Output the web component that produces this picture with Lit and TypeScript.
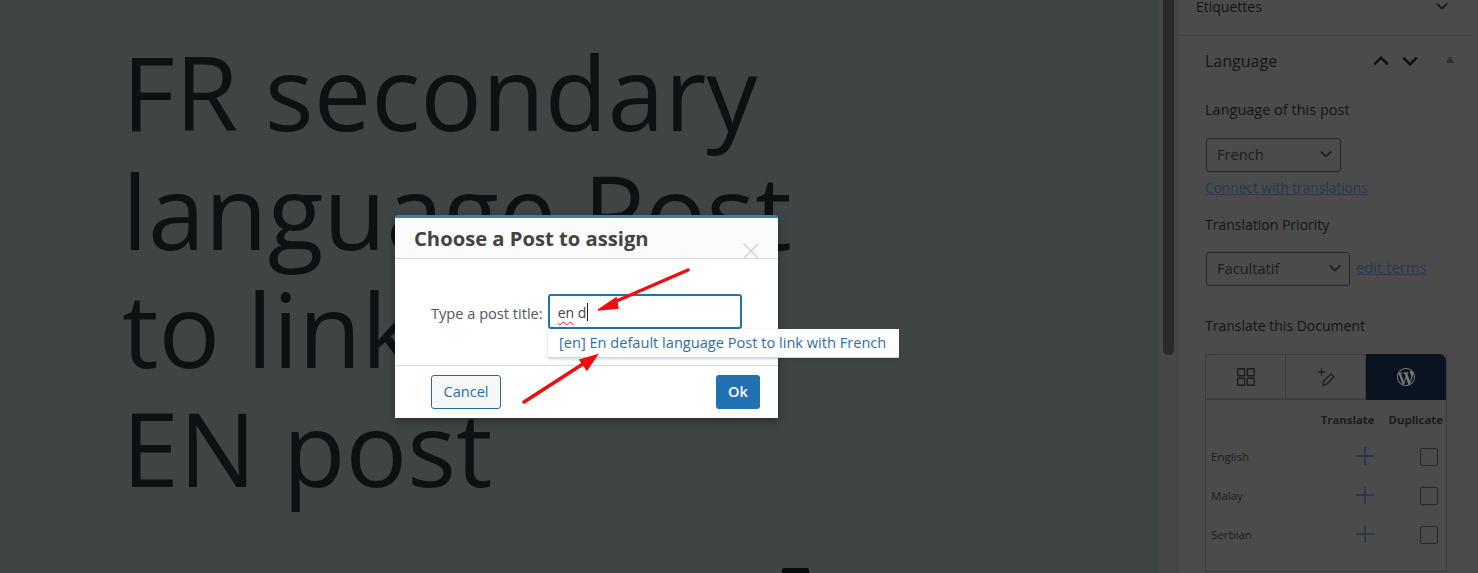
import { LitElement, html, css, svg } from "lit";
import { customElement } from "lit/decorators.js";

const chev = (w = 16, sw = 1.7, cls = "") => html`<svg class="chev ${cls}" width=${w} height=${w} viewBox="0 0 16 16"><path d="M2 5 L8 11 L14 5" fill="none" stroke="currentColor" stroke-width=${sw}/></svg>`;
const row = (name: string) => html`
  <div class="lrow"><span class="lname">${name}</span>
    <svg class="plus" width="20" height="20" viewBox="0 0 20 20"><path d="M10 1v18M1 10h18" stroke="#22344e" stroke-width="1.500" fill="none"/></svg>
    <span class="cb"></span></div>`;

@customElement("app-root")
export class AppRoot extends LitElement {
  static styles = css`
    :host { display: block; position: relative; width: 1478px; height: 573px; overflow: hidden; background: #3f4544; font-family: "Open Sans", "Noto Sans", sans-serif; }
    .page { display: grid; grid-template-columns: 1159px 19px 300px; height: 573px; }
    .main { background: #3f4544; padding: 32px 0 0 122px; position: relative; }
    h1 { margin: 0; white-space: nowrap; font-weight: 400; font-size: 102.5px; line-height: 118.7px; color: #0e1114; }
    .tip { position: absolute; left: 782px; top: 568px; width: 27px; height: 5px; background: #0a0a0a; border-radius: 2px 2px 0 0; }
    .track { background: #454746; border-right: 1px solid #424242; padding: 0 3px 0 4px; }
    .thumb { height: 355px; background: #2a2a2a; border-radius: 0 0 5px 5px; }
    .side { background: #4b4b4b; color: #1d1d1d; font-size: 14px; }
    .tags { height: 35px; border-bottom: 1px solid #414141; display: flex; justify-content: space-between; padding: 0 25px 0 18px; margin-right: 4px; color: #141414; }
    .tags span { margin-top: -3px; line-height: 20px; font-weight: 500; }
    .tags .chev { margin-top: -1px; color: #141414; }
    .body { padding: 0 28px 0 27px; }
    .head { display: flex; align-items: center; height: 50px; }
    .head .t { flex: 1; font-size: 16px; color: #161616; }
    .head .chev { color: #0e0e0e; margin-right: 11px; }
    .head .chev.up { transform: scaleY(-1); }
    .head .chev.b2 { margin-right: 27px; }
    .tri { width: 0; height: 0; border-left: 4.5px solid transparent; border-right: 4.5px solid transparent; border-bottom: 7px solid #2e2e2e; margin-right: -4px; margin-top: -4px; }
    .lab { color: #141414; line-height: 20px; }
    .l1 { margin-top: 14px; font-size: 14.5px; }
    .sel { box-sizing: border-box; height: 34px; border: 1px solid #262626; border-radius: 3px; display: flex; align-items: center; justify-content: space-between; padding: 0 7px 2px 10px; color: #1c1c1c; font-size: 14.6px; flex: none; }
    .sel .chev { color: #1c1c1c; }
    .s1 { width: 135px; margin: 18px 0 0 1px; }
    .s2 { width: 144px; margin-left: 1px; }
    .link { color: #263850; text-decoration: underline; line-height: 20px; display: block; }
    .c1 { margin-top: 6px; font-size: 13.7px; }
    .c2 { font-size: 14.8px; margin-top: -4px; }
    .l2 { margin-top: 17px; }
    .line { display: flex; align-items: center; gap: 6px; margin-top: 17px; }
    .l3 { margin-top: 30px; }
    .box { margin-top: 18px; width: 242px; box-sizing: border-box; height: 218px; border: 1px solid #3c3c3c; border-top: 0; }
    .tabs { display: grid; grid-template-columns: 80px 80px 80px; height: 46px; border-top: 1px solid #3c3c3c; margin-left: -1px; border-left: 1px solid #3c3c3c; border-radius: 4px 4px 0 0; border-bottom: 2px solid #3c3c3c; box-sizing: border-box; width: 242px; }
    .tab { display: flex; align-items: center; justify-content: center; border-right: 1px solid #3c3c3c; color: #1d1d1d; }
    .tab.on { background: #0a1320; border: 0; margin-top: -1px; margin-bottom: -2px; border-radius: 0 7px 0 0; color: #74777c; }
    .thd { display: flex; justify-content: flex-end; gap: 14px; font-size: 11.4px; font-weight: 700; color: #1b1b1b; padding: 12px 3px 9px 0; line-height: 16px; }
    .lrow { display: flex; align-items: center; height: 39px; padding: 0 8px 0 5px; font-size: 11.5px; color: #1c1c1c; }
    .lname { flex: 1; }
    .plus { margin-right: 45px; margin-top: -2px; }
    .cb { width: 18px; height: 18px; box-sizing: border-box; border: 1px solid #262626; border-radius: 2px; }

    .modal { position: absolute; left: 395px; top: 215px; width: 383px; height: 203px; background: #fff; box-sizing: border-box; border-top: 3px solid #3f7f98; border-radius: 3px 3px 0 0; box-shadow: 0 3px 8px rgba(0,0,0,.35); display: flex; flex-direction: column; }
    .mh { height: 41px; box-sizing: border-box; border-bottom: 1px solid #d5d9dd; background: #fbfbfb; padding: 0 0 0 19px; position: relative; font-size: 20.2px; font-weight: 700; color: #434343; line-height: 41px; white-space: nowrap; }
    .x { position: absolute; right: 19px; top: 25px; }
    .mb { height: 107px; box-sizing: border-box; border-bottom: 1px solid #d5d9dd; display: flex; padding: 35px 0 0 36px; gap: 5px; align-items: flex-start; font-size: 14.6px; color: #50575e; white-space: nowrap; }
    .mb label { line-height: 38px; }
    .inp { width: 194px; height: 35px; box-sizing: border-box; border: 2px solid #2271b1; border-radius: 3px; padding-left: 8px; line-height: 33px; color: #3c434a; display: flex; font-size: 14px; }
    .sq { text-decoration: underline wavy #d92020; text-decoration-thickness: 1px; text-underline-offset: 3px; }
    .caret { width: 1px; height: 18px; background: #222; margin: 7px 0 0 1px; }
    .mf { flex: 1; display: flex; align-items: center; justify-content: space-between; padding: 0 18px 0 36px; }
    .btn { box-sizing: border-box; height: 34px; border-radius: 3px; font-size: 14.6px; display: flex; align-items: center; justify-content: center; padding-bottom: 2px; }
    .cancel { width: 70px; border: 1px solid #2a6a96; color: #2a6fa6; background: #f6f7f7; }
    .ok { width: 44px; background: #2271b1; color: #fff; font-weight: 600; }
    .menu { position: absolute; left: 548px; top: 329px; width: 351px; height: 29px; box-sizing: border-box; background: #fff; border-bottom: 1px solid #c3d6e4; box-shadow: 0 1px 3px rgba(0,0,0,.18); padding-left: 11px; line-height: 27px; font-size: 14.6px; color: #2c6fa5; white-space: nowrap; }
    .arrows { position: absolute; left: 0; top: 0; pointer-events: none; }
  `;
  render() {
    return html`
      <div class="page">
        <div class="main">
          <h1>FR secondary<br />language Post<br />to link with<br />EN post</h1>
          <div class="tip"></div>
        </div>
        <div class="track"><div class="thumb"></div></div>
        <div class="side">
          <div class="tags"><span>Etiquettes</span>${chev(14, 1.8)}</div>
          <div class="body">
            <div class="head"><span class="t">Language</span>
              ${chev(18, 2, "up")}
              ${chev(18, 2, "b2")}
              <span class="tri"></span></div>
            <div class="lab l1">Language of this post</div>
            <div class="sel s1">French ${chev(14)}</div>
            <a class="link c1">Connect with translations</a>
            <div class="lab l2">Translation Priority</div>
            <div class="line"><div class="sel s2">Facultatif ${chev(14)}</div><a class="link c2">edit terms</a></div>
            <div class="lab l3">Translate this Document</div>
            <div class="box">
              <div class="tabs">
                <div class="tab"><svg width="20" height="20" viewBox="0 0 20 20" fill="none" stroke="currentColor" stroke-width="1.4"><rect x="1.7" y="1.7" width="7" height="7" rx=".5"/><rect x="11.3" y="1.7" width="7" height="7" rx=".5"/><rect x="1.7" y="11.3" width="7" height="7" rx=".5"/><rect x="11.3" y="11.3" width="7" height="7" rx=".5"/></svg></div>
                <div class="tab"><svg width="20" height="20" viewBox="0 0 20 20" fill="none" stroke="currentColor" stroke-width="1.3"><path d="M2 5h7M5.500 1.500v7M7 18.500l.8-4.500L15 6.800l3 3-7.200 7.400z"/></svg></div>
                <div class="tab on"><svg width="18" height="18" viewBox="0 0 20 20"><path fill="currentColor" d="M20 10c0-5.510-4.490-10-10-10C4.480 0 0 4.490 0 10c0 5.520 4.480 10 10 10 5.510 0 10-4.480 10-10zM7.780 15.370L4.370 6.220c.55-.02 1.170-.08 1.170-.08.5-.06.44-1.130-.06-1.110 0 0-1.450.11-2.370.11-.18 0-.37 0-.58-.01C4.120 2.690 6.870 1.090 10 1.090c2.330 0 4.450.87 6.050 2.340-.68-.11-1.650.39-1.650 1.580 0 .74.45 1.360.9 2.100.35.61.55 1.360.55 2.460 0 1.490-1.400 5-1.400 5l-3.030-8.370c.54-.02.82-.17.82-.17.5-.05.44-1.250-.06-1.220 0 0-1.440.12-2.380.12-.87 0-2.330-.12-2.330-.12-.5-.03-.56 1.200-.06 1.220l.92.08 1.260 3.410zM17.410 10c.24-.64.74-1.870.43-4.250.7 1.290 1.050 2.710 1.050 4.250 0 3.290-1.730 6.240-4.480 7.820.86-2.300 1.720-4.630 2.580-6.960zM6.100 18.090C3.120 16.650 1.110 13.530 1.110 10c0-1.300.23-2.480.72-3.590C3.250 10.300 4.670 14.200 6.100 18.090zm4.030-6.630l2.580 6.980c-.86.29-1.740.45-2.710.45-.82 0-1.610-.12-2.390-.35.84-2.370 1.690-4.750 2.520-7.080z"/></svg></div>
              </div>
              <div class="thd"><span>Translate</span><span>Duplicate</span></div>
              <div>${row("English")}${row("Malay")}${row("Serbian")}</div>
            </div>
          </div>
        </div>
      </div>
      <div class="modal">
        <div class="mh">Choose a Post to assign
          <svg class="x" width="16" height="16" viewBox="0 0 16 16"><path d="M.5.500l15 15M15.500.500l-15 15" stroke="#bcd6df" stroke-width="1.3" fill="none"/></svg>
        </div>
        <div class="mb"><label>Type a post title:</label><div class="inp"><span><span class="sq">en</span> d</span><span class="caret"></span></div></div>
        <div class="mf"><div class="btn cancel">Cancel</div><div class="btn ok">Ok</div></div>
      </div>
      <div class="menu">[en] En default language Post to link with French</div>
      <svg class="arrows" width="1478" height="573" viewBox="0 0 1478 573">
        ${svg`<path d="M688 270 L612 303" stroke="#f00d0d" stroke-width="3.500" stroke-linecap="round"/><path d="M598 310 L616 298 L618 308 Z" fill="#f00d0d" stroke="#f00d0d" stroke-width="1.500"/>
        <path d="M524 402 L586 362" stroke="#f00d0d" stroke-width="3.500" stroke-linecap="round"/><path d="M597 355 L580 360 L587 370 Z" fill="#f00d0d" stroke="#f00d0d" stroke-width="1.500"/>`}
      </svg>
    `;
  }
}
